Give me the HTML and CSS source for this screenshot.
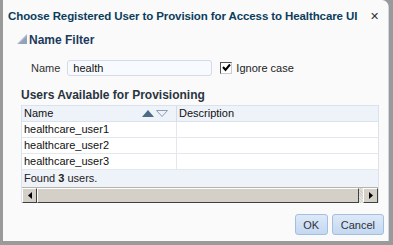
FILE: index.html
```html
<!DOCTYPE html>
<html lang="en">
<head>
    <meta charset="UTF-8">
    <title>Choose Registered User</title>
    <link rel="stylesheet" href="styles.css">
</head>
<body>
<div class="dialog">
    <div class="title-bar">
        <span class="title">Choose Registered User to Provision for Access to Healthcare UI</span>
        <span class="close">&#x2715;</span>
    </div>

    <div class="section-head">
        <svg class="disclosure" width="11" height="10" viewBox="0 0 11 10"><polygon points="10,0 10,10 0,10" fill="#a9b8c8"/><polygon points="10,2 10,10 2,10" fill="#8fa3ba"/></svg>
        <span>Name Filter</span>
    </div>

    <div class="filter-row">
        <label class="field-label">Name</label>
        <div class="text-input">health</div>
        <span class="checkbox"><svg width="9" height="9" viewBox="0 0 9 9"><path d="M1 4 L3.5 7 L8 1.5" stroke="#000" stroke-width="2" fill="none"/></svg></span>
        <span class="check-label">Ignore case</span>
    </div>

    <div class="sub-head">Users Available for Provisioning</div>

    <div class="table">
        <div class="row header">
            <div class="cell name-col">
                Name
                <span class="sort">
                    <svg width="26" height="7" viewBox="0 0 26 7"><polygon points="0,7 6,0 12,7" fill="#4e6a85"/><polygon points="14.5,0.5 25.5,0.5 20,6.5" fill="none" stroke="#8a9fb4"/></svg>
                </span>
            </div>
            <div class="cell desc-col">Description</div>
        </div>
        <div class="row"><div class="cell name-col">healthcare_user1</div><div class="cell desc-col"></div></div>
        <div class="row"><div class="cell name-col">healthcare_user2</div><div class="cell desc-col"></div></div>
        <div class="row"><div class="cell name-col">healthcare_user3</div><div class="cell desc-col"></div></div>
        <div class="footer">Found <b>3</b> users.</div>
        <div class="scrollbar">
            <div class="sb-btn"><svg width="4" height="7" viewBox="0 0 4 7"><polygon points="4,0 4,7 0,3.5" fill="#000"/></svg></div>
            <div class="sb-thumb"></div>
            <div class="sb-track"></div>
            <div class="sb-btn"><svg width="4" height="7" viewBox="0 0 4 7"><polygon points="0,0 0,7 4,3.5" fill="#000"/></svg></div>
        </div>
    </div>

    <div class="actions">
        <button class="btn ok">OK</button>
        <button class="btn">Cancel</button>
    </div>
</div>
</body>
</html>
```

FILE: styles.css
```css
body { margin: 0; background: #9a9a9a; font-family: "Liberation Sans", Arial, sans-serif; font-size: 11px; color: #222; }
.dialog {
    width: 385px;
    height: 241px;
    margin-left: 3px;
    background: #fafafa;
    border-top-right-radius: 6px;
    box-shadow: 1px 1px 0 #c9d6e6;
    box-sizing: border-box;
    padding: 0 8px 0 18px;
    display: flex;
    flex-direction: column;
}
.title-bar { display: flex; align-items: center; justify-content: space-between; height: 32px; margin-left: -13px; }
.title { font-weight: bold; font-size: 11.5px; letter-spacing: -0.1px; white-space: nowrap; color: #0c3d5c; }
.close { font-size: 11px; color: #333; margin-right: 1px; }
.section-head { display: flex; align-items: center; height: 14px; margin-top: 1px; margin-left: -4px; font-weight: bold; font-size: 12px; color: #1c3a5c; }
.disclosure { margin-right: 1px; margin-bottom: 2px; }
.filter-row { display: flex; align-items: center; height: 17px; margin-top: 12px; }
.field-label { margin-left: 10px; margin-right: 7px; color: #333; }
.text-input {
    width: 138px;
    height: 14px;
    line-height: 14px;
    padding-left: 5px;
    background: #f7fbff;
    border: 1px solid #d2dbe6;
    border-radius: 3px;
    font-size: 11px;
    color: #111;
}
.checkbox {
    width: 10px;
    height: 10px;
    margin-left: 8px;
    border: 1px solid #555;
    border-right-color: #ccc;
    border-bottom-color: #ccc;
    background: #fff;
    display: flex;
    align-items: center;
    justify-content: center;
}
.check-label { margin-left: 4px; color: #222; }
.sub-head { margin-top: 12px; height: 14px; font-weight: bold; font-size: 12px; color: #2a3440; }
.table { margin-top: 3px; width: 356px; border: 1px solid #dbe2eb; border-bottom: none; background: #eef2f9; }
.row { display: flex; height: 16px; box-sizing: border-box; border-bottom: 1px solid #e4e8ee; background: #fff; }
.row.header { background: #eef2f9; border-bottom: 1px solid #dbe2eb; }
.cell { line-height: 15px; padding-left: 2px; color: #111; box-sizing: border-box; }
.name-col { width: 155px; border-right: 1px solid #e4e8ee; display: flex; }
.header .name-col { border-right-color: #d4dbe5; }
.desc-col { flex: 1; }
.sort { margin-left: auto; margin-right: 8px; display: flex; align-items: center; }
.footer { height: 17px; line-height: 17px; padding-left: 2px; color: #222; }
.scrollbar { display: flex; height: 15px; background: #d4d0c8; border-top: 1px solid #b8b4ac; }
.sb-btn {
    width: 15px;
    box-sizing: border-box;
    background: #d4d0c8;
    border: 1px solid;
    border-color: #fff #404040 #404040 #fff;
    display: flex;
    align-items: center;
    justify-content: center;
}
.sb-thumb { flex: 1; background: #d4d0c8; border: 1px solid; border-color: #fff #404040 #404040 #fff; }
.sb-track { width: 4px; background: repeating-linear-gradient(45deg, #e8e6e1 0 1px, #d4d0c8 1px 2px); }
.actions { display: flex; justify-content: flex-end; gap: 4px; margin-top: 11px; margin-right: -4px; }
.btn {
    height: 21px;
    padding: 0 8px;
    font-family: "Liberation Sans", Arial, sans-serif;
    font-size: 11px;
    color: #333;
    background: linear-gradient(#dde9f8, #c3d8f2);
    border: 1px solid #a4bedc;
    border-radius: 3px;
}
.btn.ok { width: 33px; padding: 0; }
```
